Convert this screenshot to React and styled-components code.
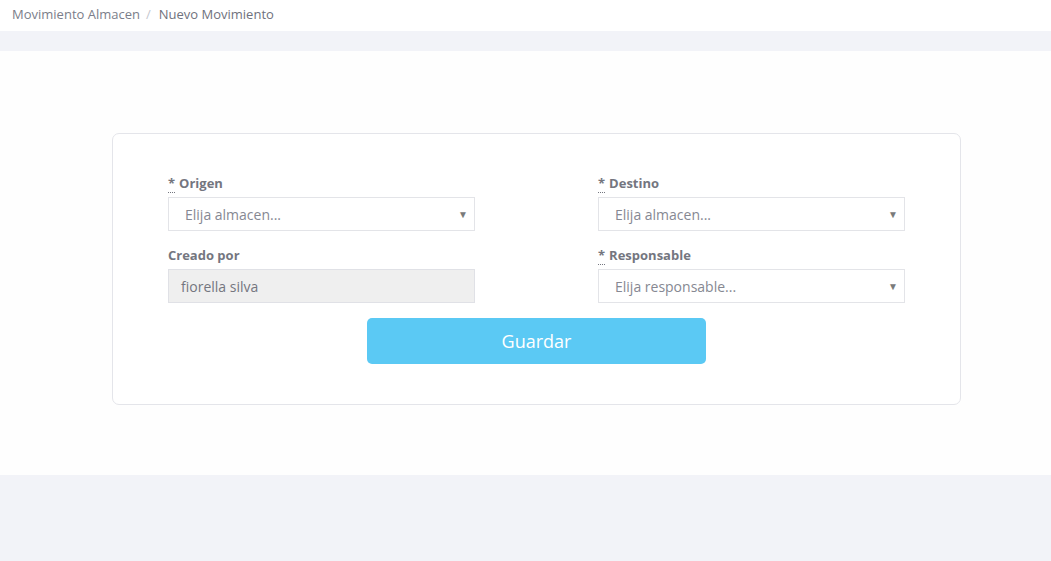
import React from "react";
import styled, { createGlobalStyle } from "styled-components";

const Global = createGlobalStyle`
  html, body { margin: 0; padding: 0; }
  body {
    background: #f2f3f8;
    font-family: "Open Sans", "Liberation Sans", sans-serif;
    color: #575962;
  }
  * { box-sizing: border-box; }
`;

const Page = styled.div`
  min-height: 561px;
  background: #f2f3f8;
`;

const BreadcrumbBar = styled.nav`
  height: 31px;
  background: #ffffff;
  display: flex;
  align-items: center;
  padding: 0 12px 3px;
  font-size: 13px;
  color: #7b7e8a;
`;

const Crumb = styled.span`
  color: ${(p) => (p.$active ? "#6f727d" : "#7b7e8a")};
`;

const Sep = styled.span`
  color: #c5c7cf;
  padding: 0 8px 0 6px;
`;

const Content = styled.main`
  margin-top: 20px;
  background: #fefefe;
  padding: 82px 90px 70px 112px;
`;

const Card = styled.form`
  border: 1px solid #e4e5ea;
  border-radius: 7px;
  background: #ffffff;
  padding: 40px 55px 40px;
`;

const Grid = styled.div`
  display: grid;
  grid-template-columns: 307px 307px;
  column-gap: 123px;
`;

const Group = styled.div`
  margin-bottom: 15px;
`;

const Label = styled.label`
  display: block;
  font-size: 13px;
  font-weight: 700;
  line-height: 18px;
  margin-bottom: 5px;
  color: #74767f;
`;

const Req = styled.abbr`
  text-decoration: none;
  border-bottom: 1px dotted #74767f;
  cursor: help;
  margin-right: 4px;
`;

const SelectBox = styled.div`
  height: 34px;
  border: 1px solid #e3e4e8;
  background: #fff;
  display: flex;
  align-items: center;
  justify-content: space-between;
  padding: 0 6px 0 16px;
  font-size: 14px;
  color: #868892;
`;

const Arrow = styled.span`
  font-size: 10px;
  color: #7a7a7a;
`;

const DisabledInput = styled.div`
  height: 34px;
  border: 1px solid #e0e1e6;
  background: #efefef;
  display: flex;
  align-items: center;
  padding: 0 12px;
  font-size: 14px;
  color: #74767f;
`;

const Actions = styled.div`
  display: flex;
  justify-content: center;
`;

const Button = styled.button`
  width: 339px;
  height: 46px;
  border: none;
  border-radius: 5px;
  background: #5bc9f4;
  color: #ffffff;
  font-family: inherit;
  font-size: 18px;
  cursor: pointer;
`;

const Select = ({ text }) => (
  <SelectBox>
    <span>{text}</span>
    <Arrow>▼</Arrow>
  </SelectBox>
);

export default function App() {
  return (
    <Page>
      <Global />
      <BreadcrumbBar>
        <Crumb>Movimiento Almacen</Crumb>
        <Sep>/</Sep>
        <Crumb $active>Nuevo Movimiento</Crumb>
      </BreadcrumbBar>
      <Content>
        <Card onSubmit={(e) => e.preventDefault()}>
          <Grid>
            <Group>
              <Label>
                <Req title="requerido">*</Req>Origen
              </Label>
              <Select text="Elija almacen..." />
            </Group>
            <Group>
              <Label>
                <Req title="requerido">*</Req>Destino
              </Label>
              <Select text="Elija almacen..." />
            </Group>
            <Group>
              <Label>Creado por</Label>
              <DisabledInput>fiorella silva</DisabledInput>
            </Group>
            <Group>
              <Label>
                <Req title="requerido">*</Req>Responsable
              </Label>
              <Select text="Elija responsable..." />
            </Group>
          </Grid>
          <Actions>
            <Button type="submit">Guardar</Button>
          </Actions>
        </Card>
      </Content>
    </Page>
  );
}
